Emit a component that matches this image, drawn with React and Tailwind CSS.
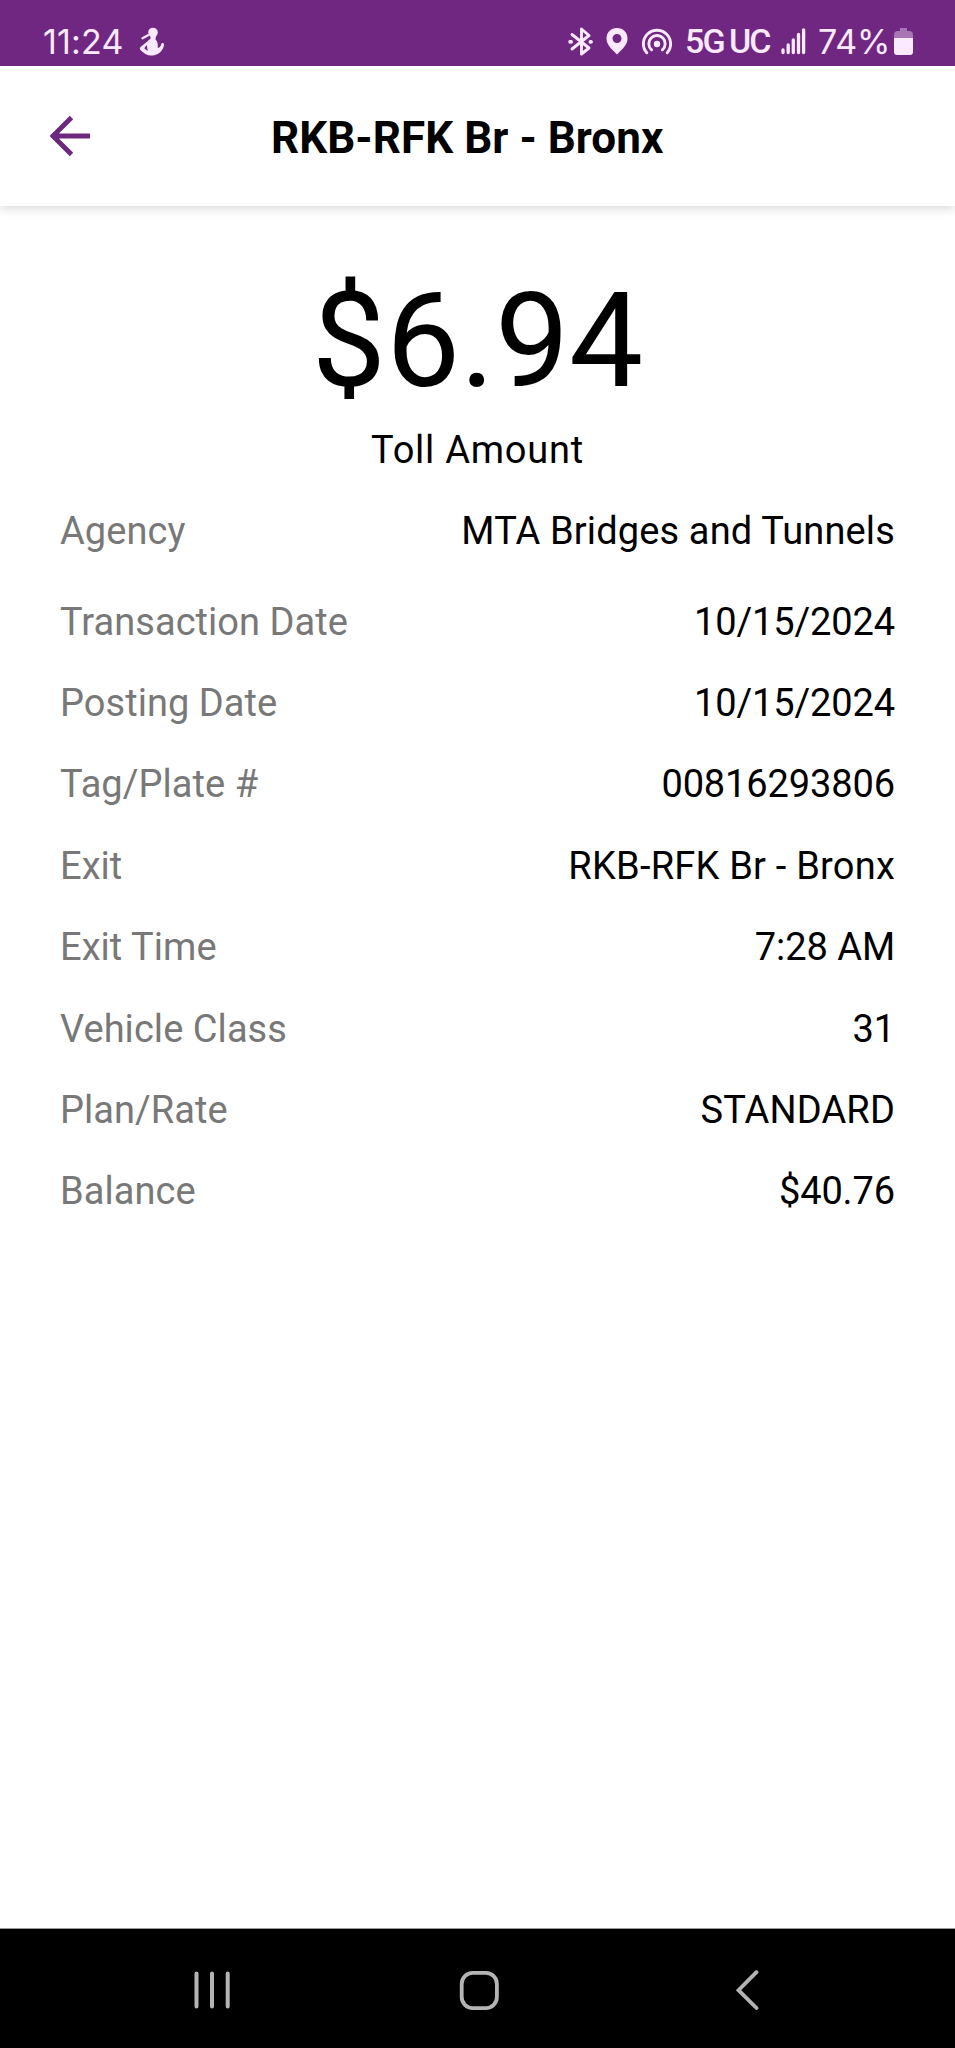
const rows = [
  ["Transaction Date", "10/15/2024", "tracking-[-0.120px]"],
  ["Posting Date", "10/15/2024", "tracking-[-0.120px]"],
  ["Tag/Plate #", "00816293806", "tracking-[-0.120px]"],
  ["Exit", "RKB-RFK Br - Bronx", "tracking-[0.220px]"],
  ["Exit Time", "7:28 AM", "tracking-[-0.060px]"],
  ["Vehicle Class", "31", "tracking-[-0.120px]"],
  ["Plan/Rate", "STANDARD", "tracking-[0.150px]"],
  ["Balance", "$40.76", "tracking-[-0.120px]"],
];

function StatusBar() {
  return (
    <div className="z-20 flex h-[66px] shrink-0 items-start bg-[#702782] pt-[22px] pl-[43px] text-[#fbeaff]">
      <div className="h-10 w-[96px] font-['Inter',sans-serif] text-[34px] leading-[40px] tracking-[0.200px] whitespace-nowrap">11:24</div>
      <svg className="mt-[5px] h-[30px] w-[26px]" viewBox="0 0 26 30" fill="currentColor">
        <circle cx="14" cy="5.500" r="4.800" />
        <path d="M11.500 8.500 L17 8.500 L16.500 12.500 C18.500 14 19 17 18.800 21 C21 20.500 22 18.500 22.300 17 C22.600 15.500 25.300 15.700 25 17.700 C24.500 23 19.500 28.500 13 28.500 C8 28.500 5 26.500 1.500 23 C.600 22.100 .600 21 1.500 20 L8 14.800 C9 13.500 10.300 12.500 11.500 12 Z" />
        <path d="M3.500 11.200 L9 8.200" fill="none" stroke="currentColor" strokeWidth="2.300" strokeLinecap="round" />
        <path d="M7.800 18 L5.200 21.300 L8.800 24 Z" fill="#702782" />
      </svg>
      <svg className="mt-[5px] ml-[402px] h-[30px] w-[26px]" viewBox="0 0 26 30" fill="none" stroke="currentColor" strokeWidth="2.900" strokeLinejoin="round" strokeLinecap="round">
        <path d="M5 7.500 L22 21 L14.500 27 V2 L22 8.500 L5 22" />
        <path d="M3 14.900 H4.200 M23.300 14.900 H24.100" strokeWidth="3.600" />
      </svg>
      <svg className="mt-[6px] ml-[13px] h-[27px] w-[22px]" viewBox="0 0 22 27" fill="currentColor" fillRule="evenodd">
        <path d="M11 0 C4.800 0 .500 4.500 .500 10.500 C.500 16.500 5 20.500 11 26.500 C17 20.500 21.500 16.500 21.500 10.500 C21.500 4.500 17.200 0 11 0 Z M11 6 A4.500 4.500 0 1 1 11 15 A4.500 4.500 0 1 1 11 6 Z" />
      </svg>
      <svg className="mt-[6px] ml-[13px] h-[28px] w-[32px]" viewBox="0 0 32 28" fill="none" stroke="currentColor" strokeWidth="2.900" strokeLinecap="round">
        <path d="M5.800 24.800 A13.600 13.600 0 1 1 26.200 24.800" />
        <path d="M10.600 21.800 A8.200 8.200 0 1 1 21.400 21.800" />
        <circle cx="16" cy="16" r="3.200" fill="currentColor" stroke="none" />
      </svg>
      <div className="ml-[12px] h-10 w-[44px] font-['Roboto',sans-serif] text-[34px] leading-[39px] font-medium tracking-[-1.800px] whitespace-nowrap">5G</div>
      <div className="h-10 w-[51px] font-['Roboto',sans-serif] text-[34px] leading-[39px] font-medium tracking-[-2px] whitespace-nowrap">UC</div>
      <svg className="mt-[6px] ml-px h-[27px] w-[25px]" viewBox="0 0 25 27" fill="none" stroke="currentColor" strokeWidth="3.300" strokeLinecap="round">
        <path d="M2 22 V24.500 M7.200 17 V24.500 M12.300 12 V24.500 M17.500 6.500 V24.500 M22.600 2 V24.500" />
      </svg>
      <div className="ml-[12px] h-10 w-[76px] font-['Inter',sans-serif] text-[34px] leading-[40px] tracking-[-0.100px] whitespace-nowrap">74%</div>
      <svg className="mt-[5px] h-[29px] w-[19px]" viewBox="0 0 19 29" fill="currentColor">
        <path d="M6 1 H13 V4 H16 Q19 4.500 19 8 V11 H0 V8 Q0 4.500 3 4 H6 Z" opacity="0.400" />
        <path d="M0 11 H19 V25 Q19 28 16 28 H3 Q0 28 0 25 Z" />
      </svg>
    </div>
  );
}

function Header() {
  return (
    <header className="z-10 flex h-[140px] shrink-0 items-center bg-white pl-[50px] shadow-[0_3px_9px_rgba(0,0,0,0.140)]">
      <svg className="h-[42px] w-[42px]" viewBox="0 0 42 42" fill="none" stroke="#6d2980" strokeWidth="4.800">
        <path d="M40 21 H3.500 M21.500 2.500 L3 21 L21.500 39.500" />
      </svg>
      <h1 className="ml-[179px] pt-[3px] text-[44px] leading-none font-bold tracking-[0.040px] whitespace-nowrap">RKB-RFK Br - Bronx</h1>
    </header>
  );
}

function Row({ label, value, tracking, className }) {
  return (
    <div className={"flex items-center justify-between " + className}>
      <span className="tracking-[0.050px] text-[#787878]">{label}</span>
      <span className={tracking}>{value}</span>
    </div>
  );
}

export default function App() {
  return (
    <div className="flex h-[2048px] w-[955px] flex-col overflow-hidden bg-white font-['Roboto',sans-serif] text-black">
      <StatusBar />
      <Header />
      <main className="flex-1 px-[60px] pt-[65px] text-[38px] leading-[44px]">
        <div className="text-center text-[132px] leading-[140px]">$6.94</div>
        <div className="mt-[17px] text-center tracking-[0.750px]">Toll Amount</div>
        <div className="mt-[9px]">
          <Row label="Agency" value="MTA Bridges and Tunnels" tracking="tracking-[0.140px]" className="h-[100px]" />
          {rows.map(([label, value, tracking]) => (
            <Row key={label} label={label} value={value} tracking={tracking} className="h-[81.400px]" />
          ))}
        </div>
      </main>
      <nav className="flex h-[120px] shrink-0 items-start border-t border-[#999999] bg-black pt-[41px] pl-[193px]">
        <svg className="h-[40px] w-[38px]" viewBox="0 0 38 40" fill="none" stroke="#b4b4b4" strokeWidth="4" strokeLinecap="round">
          <path d="M3.500 3.500 V36.500 M19 3.500 V36.500 M34.700 3.500 V36.500" />
        </svg>
        <svg className="ml-[228px] h-[40px] w-[40px]" viewBox="0 0 40 40" fill="none" stroke="#b4b4b4" strokeWidth="3.800">
          <rect x="2.700" y="2.900" width="35.200" height="35.200" rx="11" />
        </svg>
        <svg className="ml-[235px] h-[40px] w-[26px]" viewBox="0 0 26 40" fill="none" stroke="#b4b4b4" strokeWidth="3.800" strokeLinecap="round">
          <path d="M22.500 2.200 L4.500 20.200 L22.500 38" />
        </svg>
      </nav>
    </div>
  );
}
